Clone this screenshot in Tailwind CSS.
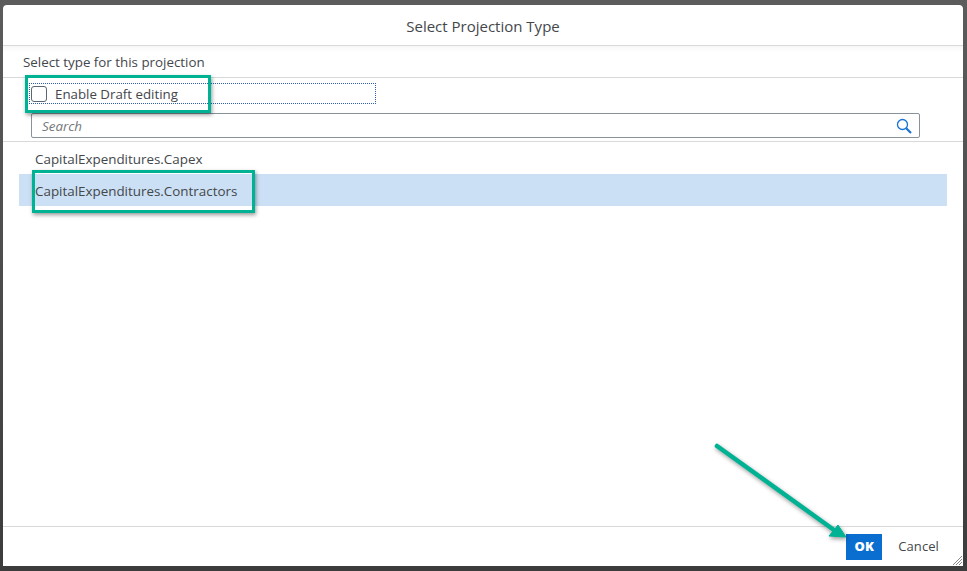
<!DOCTYPE html>
<html lang="en">
  <head>
    <meta charset="UTF-8" />
    <script src="https://cdn.jsdelivr.net/npm/@tailwindcss/browser@4"></script>
    <title>Select Projection Type</title>
  </head>
  <body class="w-[967px] h-[571px] overflow-hidden bg-gradient-to-b from-[#5c5c5c] to-[#3c3c3c] font-['Open_Sans',sans-serif] text-[#43474b]">
    <div class="relative mt-[5px] ml-[3px] w-[960px] h-[561px] bg-white rounded-t-[4px] flex flex-col">
      <header class="h-[41px] pt-[2px] shrink-0 border-b border-[#d9d9d9] flex items-center justify-center text-[15px]">Select Projection Type</header>
      <div class="h-[32px] pt-[2px] shrink-0 border-b border-[#d9d9d9] bg-gradient-to-b from-[#f7f7f7] to-white to-[20%] pl-[20px] flex items-center text-[13.35px]">Select type for this projection</div>
      <div class="pl-[26px] pt-[5px] h-[64px] shrink-0 border-b border-[#d9d9d9]">
        <label class="w-[347px] h-[21px] border border-dotted border-[#2a5db0] flex items-center pl-[1px]">
          <span class="w-[16px] h-[16px] border border-[#5b6670] rounded-[3px] bg-white"></span>
          <span class="ml-[8px] pt-[2px] text-[13.3px]">Enable Draft editing</span>
        </label>
        <div class="mt-[9px] ml-[2px] w-[889px] h-[25px] border border-[#89919a] rounded-[2px] flex items-center justify-between pl-[10px] pr-[7px]">
          <span class="italic pt-[2px] text-[13.4px] text-[#74777a]">Search</span>
          <svg width="16" height="16" viewBox="0 0 16 16" fill="none" stroke="#1a73d4">
            <circle cx="6.5" cy="6.5" r="5" stroke-width="1.3" />
            <path d="M10.2 10.2 15 15" stroke-width="2.2" />
          </svg>
        </div>
      </div>
      <ul class="text-[13.4px]">
        <li class="h-[32px] pt-[2px] flex items-center pl-[32px]">CapitalExpenditures.Capex</li>
        <li class="h-[32px] pt-[2px] ml-[16px] mr-[16px] pl-[16px] flex items-center bg-[#cce0f5]">CapitalExpenditures.Contractors</li>
      </ul>
      <footer class="absolute left-0 right-0 bottom-0 h-[40px] border-t border-[#d9d9d9] flex items-center justify-end pr-[24px] gap-[16px]">
        <button class="w-[36px] h-[26px] bg-[#0a6ed1] text-white font-extrabold text-[13px]">OK</button>
        <button class="text-[13px] tracking-[0.1px]">Cancel</button>
      </footer>
      <svg class="absolute right-[1px] bottom-[1px]" width="9" height="9" viewBox="0 0 9 9" stroke="#888" fill="none">
        <path d="M0 9 9 0M3 9l6-6M6 9l3-3" />
      </svg>
    </div>

    <!-- annotations over the screenshot -->
    <div class="absolute left-[25px] top-[75px] w-[186px] h-[38px] border-[3px] border-[#00b294] shadow-[1px_2px_4px_rgba(0,0,0,0.4)]"></div>
    <div class="absolute left-[32px] top-[170px] w-[223px] h-[43px] border-[3px] border-[#00b294] shadow-[1px_2px_4px_rgba(0,0,0,0.4)]"></div>
    <svg class="absolute left-[700px] top-[430px] drop-shadow-[1px_2px_2px_rgba(0,0,0,0.4)]" width="160" height="120" viewBox="0 0 160 120">
      <path d="M17 16 134 100" stroke="#00b294" stroke-width="4.5" stroke-linecap="round" fill="none" />
      <path d="M146 107 129 106 138 95Z" fill="#00b294" stroke="#00b294" stroke-width="1" />
    </svg>
  </body>
</html>
